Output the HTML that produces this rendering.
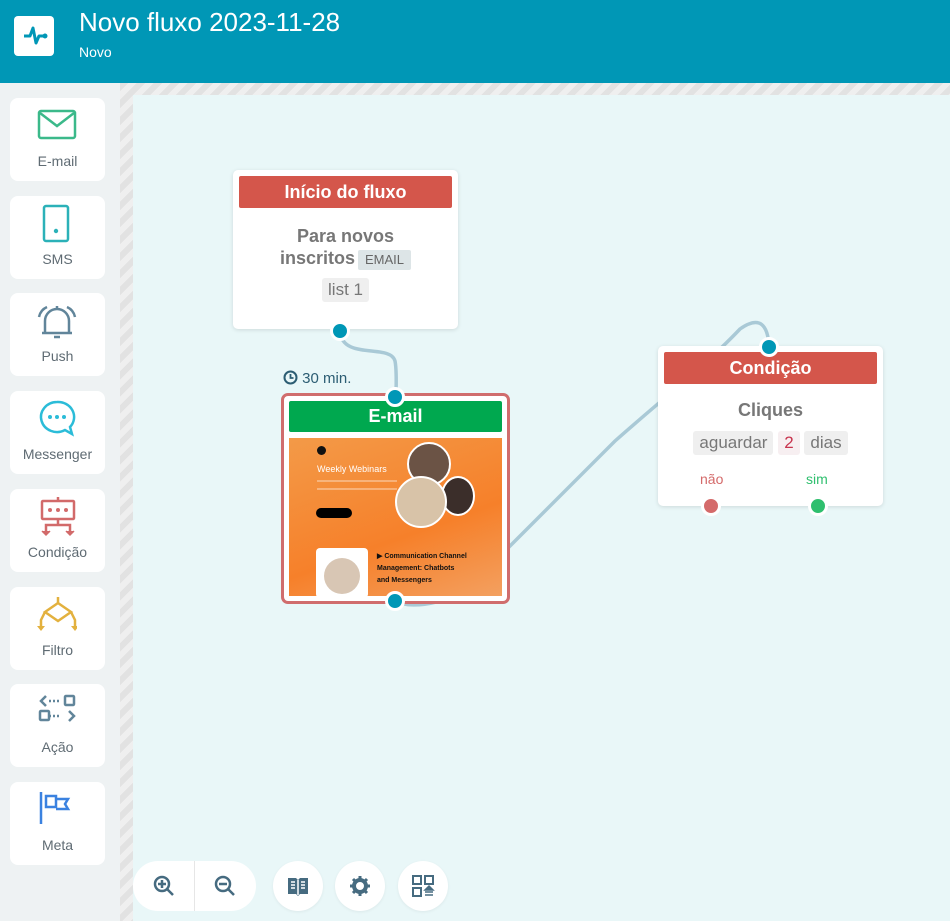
<!DOCTYPE html>
<html><head><meta charset="utf-8"><style>
*{margin:0;padding:0;box-sizing:border-box}
body{width:950px;height:921px;overflow:hidden;font-family:"Liberation Sans",sans-serif;background:#e9f7f8;position:relative}
.hdr{position:absolute;left:0;top:0;width:950px;height:83px;background:#0097b6}
.logo{position:absolute;left:14px;top:16px;width:40px;height:40px;background:#fff;border-radius:4px}
.t1{position:absolute;left:79px;top:7px;color:#fff;font-size:26px}
.t2{position:absolute;left:79px;top:44px;color:#fff;font-size:14px}
.side{position:absolute;left:0;top:83px;width:120px;height:838px;background:#eef2f3}
.stripe{position:absolute;background:repeating-linear-gradient(135deg,#e2e2e2 0 6px,#efefef 6px 12px)}
.card{position:absolute;left:10px;width:95px;height:83px;background:#fff;border-radius:8px;text-align:center}
.card svg{position:absolute;left:27px;top:8px}
.card span{position:absolute;left:0;right:0;top:55px;font-size:14px;color:#5f6b73}
.node{position:absolute;background:#fff;border-radius:5px;box-shadow:0 1px 4px rgba(0,0,0,.12);text-align:center}
.nh{position:absolute;left:6px;right:6px;top:6px;height:32px;background:#d4564b;color:#fff;font-weight:bold;font-size:18px;line-height:32px;border-radius:2px}
.dot{position:absolute;width:20px;height:20px;border-radius:50%;border:3px solid #fff;background:#0097b6}
.chip{display:inline-block;background:#efefef;border-radius:3px;color:#777;padding:2px 6px}
.btn{position:absolute;top:861px;width:50px;height:50px;border-radius:25px;background:#fff;box-shadow:0 1px 3px rgba(0,0,0,.06)}
.btn svg{position:absolute;left:13px;top:13px}
</style></head><body>
<div class="hdr">
 <div class="logo"><svg width="40" height="40" viewBox="0 0 40 40"><path d="M10 20h6l3-8 3 15 3-7h6" fill="none" stroke="#0097b6" stroke-width="3" stroke-linejoin="round"/><circle cx="31" cy="20" r="2.5" fill="#0097b6"/></svg></div>
 <div class="t1">Novo fluxo 2023-11-28</div>
 <div class="t2">Novo</div>
</div>
<div class="side"></div>
<div class="stripe" style="left:120px;top:83px;width:13px;height:838px"></div>
<div class="stripe" style="left:120px;top:83px;width:830px;height:12px"></div>

<div class="card" style="top:98px"><svg width="40" height="40"><rect x="2" y="5" width="36" height="27" rx="2" fill="none" stroke="#3bb98a" stroke-width="2.5"/><path d="M3 7l17 13 17-13" fill="none" stroke="#3bb98a" stroke-width="2.5"/></svg><span>E-mail</span></div>
<div class="card" style="top:196px"><svg width="40" height="40"><rect x="7" y="2" width="24" height="35" rx="2" fill="none" stroke="#2bb1b8" stroke-width="2.5"/><circle cx="19" cy="27" r="2.2" fill="#2bb1b8"/></svg><span>SMS</span></div>
<div class="card" style="top:293px"><svg width="40" height="40"><path d="M8 32V20a12 12 0 0 1 24 0v12zM5 32h30M17 36h6M20 5v3" fill="none" stroke="#61859a" stroke-width="2.5"/><path d="M2 16a14 14 0 0 1 8-10M38 16a14 14 0 0 0-8-10" fill="none" stroke="#61859a" stroke-width="2.5"/></svg><span>Push</span></div>
<div class="card" style="top:391px"><svg width="40" height="40"><path d="M20 3a16 15 0 1 0 8 28l7 4-2-7A16 15 0 0 0 20 3z" fill="none" stroke="#2bbcd8" stroke-width="2.5"/><circle cx="13" cy="18" r="2" fill="#2bbcd8"/><circle cx="20" cy="18" r="2" fill="#2bbcd8"/><circle cx="27" cy="18" r="2" fill="#2bbcd8"/></svg><span>Messenger</span></div>
<div class="card" style="top:489px"><svg width="40" height="40"><rect x="5" y="4" width="32" height="18" rx="1" fill="none" stroke="#d26a6a" stroke-width="2.5"/><circle cx="13" cy="13" r="2" fill="#d26a6a"/><circle cx="21" cy="13" r="2" fill="#d26a6a"/><circle cx="29" cy="13" r="2" fill="#d26a6a"/><path d="M21 0v4M21 22v6M9 36v-8h24v8" fill="none" stroke="#d26a6a" stroke-width="2.5"/><path d="M5 34l4 4 4-4M29 34l4 4 4-4" fill="#d26a6a" stroke="#d26a6a" stroke-width="1.5"/></svg><span>Condição</span></div>
<div class="card" style="top:587px"><svg width="40" height="40"><path d="M21 2v6M21 8l13 9-13 9-13-9zM8 17l-4 8v6M34 17l4 8v6" fill="none" stroke="#e3b13e" stroke-width="2.5"/><path d="M0 31h8l-4 5zM34 31h8l-4 5z" fill="#e3b13e"/></svg><span>Filtro</span></div>
<div class="card" style="top:684px"><svg width="40" height="40"><path d="M9 4l-5 5 5 5M12 9h2M16 9h2M20 9h2M12 24h2M16 24h2M20 24h2M32 19l5 5-5 5" fill="none" stroke="#61859a" stroke-width="2.5"/><rect x="28" y="4" width="9" height="9" rx="1" fill="none" stroke="#61859a" stroke-width="2.5"/><rect x="3" y="19" width="9" height="9" rx="1" fill="none" stroke="#61859a" stroke-width="2.5"/></svg><span>Ação</span></div>
<div class="card" style="top:782px"><svg width="40" height="40"><path d="M4 2v32" stroke="#3b82e0" stroke-width="2.5"/><path d="M9 6h10v11H9zM19 9h12l-3 5 3 5H19" fill="none" stroke="#3b82e0" stroke-width="2.5"/></svg><span>Meta</span></div>

<svg style="position:absolute;left:0;top:0" width="950" height="921"><g fill="none" stroke="#a9c9d6" stroke-width="3.5"><path d="M340 331c2 30 50 12 55 30c2 10 1 25 1 36"/><path d="M395 601c20 10 60 0 80-20l140-140c45-40 90-75 125-112c20-14 28-4 29 18"/></g></svg>

<div class="node" style="left:233px;top:170px;width:225px;height:159px">
 <div class="nh">Início do fluxo</div>
 <div style="position:absolute;left:0;right:0;top:55px;font-size:18px;font-weight:bold;color:#777;line-height:22px">Para novos<br>inscritos<span style="display:inline-block;background:#dde5e7;font-weight:normal;font-size:13px;color:#666;padding:0 7px;margin-left:3px;line-height:20px;border-radius:2px">EMAIL</span></div>
 <div style="position:absolute;left:0;right:0;top:108px"><span class="chip" style="font-size:17px">list 1</span></div>
</div>
<div class="dot" style="left:330px;top:321px"></div>

<div style="position:absolute;left:283px;top:370px;color:#2c5d73;font-size:15px"><svg width="15" height="15" style="vertical-align:-2px"><circle cx="7.5" cy="7.5" r="6" fill="none" stroke="#2c5d73" stroke-width="2"/><path d="M7.5 4v4h3" fill="none" stroke="#2c5d73" stroke-width="1.8"/></svg> 30 min.</div>
<div style="position:absolute;left:281px;top:393px;width:229px;height:211px;border:3px solid #d06d6d;border-radius:7px;background:#fff"></div>
<div style="position:absolute;left:289px;top:401px;width:213px;height:31px;background:#00a84f;color:#fff;font-weight:bold;font-size:18px;text-align:center;line-height:31px;border-radius:2px">E-mail</div>
<div style="position:absolute;left:289px;top:438px;width:213px;height:158px;background:linear-gradient(160deg,#f39a48,#f6802a 60%,#f3a060);overflow:hidden">
 <div style="position:absolute;left:28px;top:8px;width:9px;height:9px;border-radius:50%;background:#111"></div>
 <div style="position:absolute;left:28px;top:26px;color:#fff;font-size:9px">Weekly Webinars</div>
 <div style="position:absolute;left:28px;top:42px;width:80px;height:10px;border-top:2px solid #fff5;border-bottom:2px solid #fff5"></div>
 <div style="position:absolute;left:27px;top:70px;width:36px;height:10px;background:#000;border-radius:5px"></div>
 <div style="position:absolute;left:118px;top:4px;width:44px;height:44px;border-radius:50%;background:#6b5345;border:2px solid #fff"></div>
 <div style="position:absolute;left:152px;top:38px;width:34px;height:40px;border-radius:50%;background:#3b2e2a;border:2px solid #fff"></div>
 <div style="position:absolute;left:106px;top:38px;width:52px;height:52px;border-radius:50%;background:#d8c3a8;border:2px solid #fff"></div>
 <div style="position:absolute;left:27px;top:110px;width:52px;height:50px;background:#fff;border-radius:4px"></div>
 <div style="position:absolute;left:35px;top:120px;width:36px;height:36px;border-radius:50%;background:#d8c6b4"></div>
 <div style="position:absolute;left:88px;top:113px;color:#111;font-size:7px;line-height:12px;font-weight:bold">▶ Communication Channel<br>Management: Chatbots<br>and Messengers</div>
</div>
<div class="dot" style="left:385px;top:387px"></div>
<div class="dot" style="left:385px;top:591px"></div>

<div class="node" style="left:658px;top:346px;width:225px;height:160px">
 <div class="nh">Condição</div>
 <div style="position:absolute;left:0;right:0;top:54px;font-size:18px;font-weight:bold;color:#777">Cliques</div>
 <div style="position:absolute;left:0;right:0;top:85px;font-size:17px"><span class="chip">aguardar</span> <span class="chip" style="color:#c8344e;background:#f7eff1">2</span> <span class="chip">dias</span></div>
 <div style="position:absolute;left:42px;top:125px;color:#d46a6a;font-size:14px">não</div>
 <div style="position:absolute;left:148px;top:125px;color:#2fbf6e;font-size:14px">sim</div>
</div>
<div class="dot" style="left:759px;top:337px"></div>
<div class="dot" style="left:701px;top:496px;background:#d46a6a"></div>
<div class="dot" style="left:808px;top:496px;background:#2fbf6e"></div>

<div style="position:absolute;left:133px;top:861px;width:123px;height:50px;border-radius:25px;background:#fff"><div style="position:absolute;left:61px;top:0;width:1px;height:50px;background:#e6e6e6"></div>
<svg style="position:absolute;left:20px;top:14px" width="22" height="22"><circle cx="9" cy="9" r="7" fill="none" stroke="#466b80" stroke-width="2.5"/><path d="M14 14l6 6M9 5v8M5 9h8" stroke="#466b80" stroke-width="2.5"/></svg>
<svg style="position:absolute;left:81px;top:14px" width="22" height="22"><circle cx="9" cy="9" r="7" fill="none" stroke="#466b80" stroke-width="2.5"/><path d="M14 14l6 6M5 9h8" stroke="#466b80" stroke-width="2.5"/></svg></div>
<div class="btn" style="left:273px"><svg width="24" height="24"><path d="M2 4h8l2 2 2-2h8v16h-8l-2 2-2-2H2z" fill="#466b80"/><path d="M5 8h4M5 11h4M5 14h4M15 8h4M15 11h4M15 14h4M12 6v15" stroke="#fff" stroke-width="1.5"/></svg></div>
<div class="btn" style="left:335px"><svg width="24" height="24"><circle cx="12" cy="12" r="6" fill="none" stroke="#466b80" stroke-width="4"/><path d="M12 2v4M12 18v4M2 12h4M18 12h4M5 5l3 3M16 16l3 3M5 19l3-3M16 8l3-3" stroke="#466b80" stroke-width="3"/></svg></div>
<div class="btn" style="left:398px"><svg width="24" height="24"><rect x="2" y="2" width="8" height="8" fill="none" stroke="#466b80" stroke-width="2"/><rect x="2" y="14" width="8" height="8" fill="none" stroke="#466b80" stroke-width="2"/><rect x="14" y="2" width="8" height="8" fill="none" stroke="#466b80" stroke-width="2"/><path d="M18 12l4 4h-8zM14 18h8M14 21h8" fill="#466b80" stroke="#466b80" stroke-width="1.5"/></svg></div>
</body></html>
